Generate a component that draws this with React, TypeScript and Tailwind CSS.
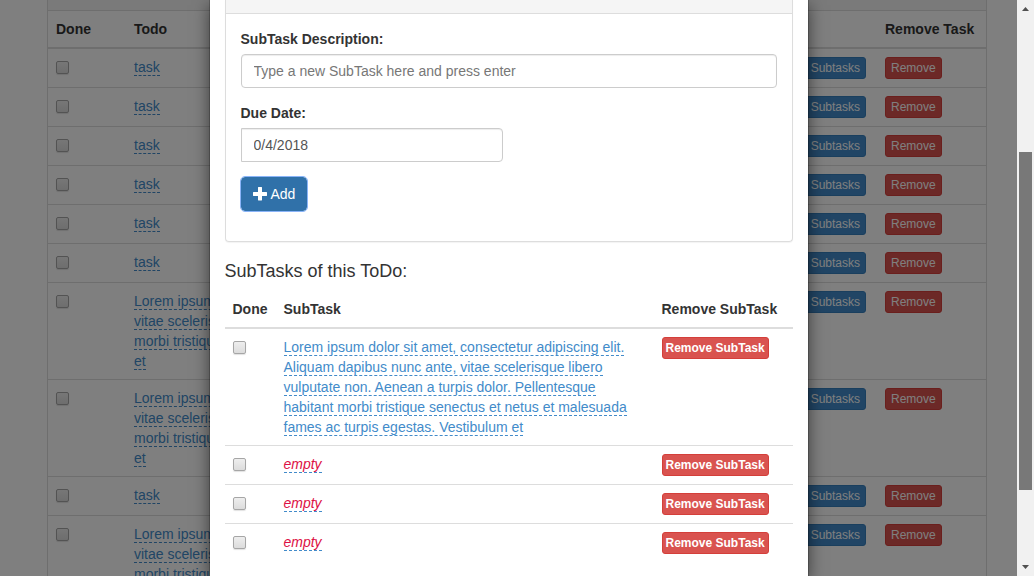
import type { InputHTMLAttributes } from "react";

const LONG_TEXT =
  "Lorem ipsum dolor sit amet, consectetur adipiscing elit. Aliquam dapibus nunc ante, vitae scelerisque libero vulputate non. Aenean a turpis dolor. Pellentesque habitant morbi tristique senectus et netus et malesuada fames ac turpis egestas. Vestibulum et";

const todos = [
  "task",
  "task",
  "task",
  "task",
  "task",
  "task",
  LONG_TEXT,
  LONG_TEXT,
  "task",
  LONG_TEXT,
];

const subTasks = [LONG_TEXT, "", "", ""];

function Checkbox(props: InputHTMLAttributes<HTMLInputElement>) {
  return (
    <input
      type="checkbox"
      className="mt-1 block size-[13px] appearance-none rounded-[2px] border border-[#a6a6a6] bg-linear-to-b from-[#eeeeee] to-[#dcdcdc] shadow-[0_1px_1px_rgba(0,0,0,0.12)] checked:from-[#428bca] checked:to-[#428bca]"
      {...props}
    />
  );
}

function EditableText({ text }: { text: string }) {
  if (!text) {
    return (
      <a href="#" className="border-b border-dashed border-[#428bca] text-[#dd1144] italic">
        empty
      </a>
    );
  }
  return (
    <a href="#" className="border-b border-dashed border-[#428bca] text-[#428bca]">
      {text}
    </a>
  );
}

function TodoTable() {
  return (
    <table className="w-full table-fixed border-separate border-spacing-0">
      <colgroup>
        <col className="w-[78px]" />
        <col className="w-[543px]" />
        <col />
        <col className="w-[109px]" />
      </colgroup>
      <thead>
        <tr className="text-left font-bold">
          <th className="border-b-2 border-[#ddd] p-2">Done</th>
          <th className="border-b-2 border-[#ddd] p-2">Todo</th>
          <th className="border-b-2 border-[#ddd] p-2" aria-label="Subtasks" />
          <th className="border-b-2 border-[#ddd] p-2 whitespace-nowrap">Remove Task</th>
        </tr>
      </thead>
      <tbody className="[&>tr+tr>td]:border-t [&>tr+tr>td]:border-[#ddd]">
        {todos.map((todo, i) => (
          <tr key={i} className="align-top">
            <td className="p-2">
              <Checkbox aria-label={`Todo ${i + 1} done`} />
            </td>
            <td className="p-2">
              <EditableText text={todo} />
            </td>
            <td className="py-2 pr-[11px]">
              <button
                type="button"
                className="ml-auto block rounded-[3px] border border-[#357ebd] bg-[#428bca] px-[5px] py-px text-xs leading-[18px] text-white"
              >
                Subtasks
              </button>
            </td>
            <td className="p-2">
              <button
                type="button"
                className="block rounded-[3px] border border-[#d43f3a] bg-[#d9534f] px-[5px] py-px text-xs leading-[18px] text-white"
              >
                Remove
              </button>
            </td>
          </tr>
        ))}
      </tbody>
    </table>
  );
}

function PlusIcon() {
  return (
    <svg viewBox="0 0 14 14" className="size-[14px] fill-current" aria-hidden="true">
      <path d="M5.400 0h3.200q.4 0 .4.4V5h4.600q.4 0 .4.4v3.200q0 .4-.4.4H9v4.100q0 .4-.4.4H5.400q-.4 0-.4-.4V9H.4q-.4 0-.4-.4V5.400q0-.4.4-.4H5V.4q0-.4.4-.4z" />
    </svg>
  );
}

function SubTaskForm() {
  return (
    <section className="rounded-b border border-t-0 border-[#ddd] shadow-[0_1px_1px_rgba(0,0,0,0.05)]">
      <div className="h-[14px] border-b border-[#ddd] bg-[#f5f5f5]" />
      <form className="p-[15px]" onSubmit={(e) => e.preventDefault()}>
        <label htmlFor="description" className="mb-[5px] block font-bold">
          SubTask Description:
        </label>
        <input
          id="description"
          type="text"
          placeholder="Type a new SubTask here and press enter"
          className="mb-[15px] block h-[34px] w-full rounded border border-[#ccc] px-3 text-[#555] shadow-[inset_0_1px_1px_rgba(0,0,0,0.075)] placeholder:text-[#777]"
        />
        <label htmlFor="due" className="mb-[5px] block font-bold">
          Due Date:
        </label>
        <input
          id="due"
          type="text"
          defaultValue="0/4/2018"
          className="mb-[15px] block h-[34px] w-[262px] rounded-r border border-[#ccc] px-3 text-[#555] shadow-[inset_0_1px_1px_rgba(0,0,0,0.075)]"
        />
        <button
          type="submit"
          className="mb-[15px] flex h-[34px] items-center gap-1 rounded border border-[#3071a9] bg-[#3071a9] px-[11px] text-white outline-1 outline-[#8ab4f8]"
        >
          <PlusIcon />
          Add
        </button>
      </form>
    </section>
  );
}

function SubTaskTable() {
  return (
    <table className="w-full table-fixed border-separate border-spacing-0">
      <colgroup>
        <col className="w-[51px]" />
        <col />
        <col className="w-[139px]" />
      </colgroup>
      <thead>
        <tr className="text-left font-bold">
          <th className="border-b-2 border-[#ddd] p-2">Done</th>
          <th className="border-b-2 border-[#ddd] p-2">SubTask</th>
          <th className="border-b-2 border-[#ddd] p-2 whitespace-nowrap">Remove SubTask</th>
        </tr>
      </thead>
      <tbody className="[&>tr+tr>td]:border-t [&>tr+tr>td]:border-[#ddd]">
        {subTasks.map((subTask, i) => (
          <tr key={i} className="align-top">
            <td className="p-2">
              <Checkbox aria-label={`SubTask ${i + 1} done`} />
            </td>
            <td className="p-2">
              <EditableText text={subTask} />
            </td>
            <td className="p-2">
              <button
                type="button"
                className="block rounded-[3px] border border-[#d43f3a] bg-[#d9534f] px-[3px] py-px text-xs leading-[18px] font-bold whitespace-nowrap text-white"
              >
                Remove SubTask
              </button>
            </td>
          </tr>
        ))}
      </tbody>
    </table>
  );
}

function Scrollbar() {
  return (
    <div className="flex w-[17px] shrink-0 flex-col items-center bg-[#f1f1f1]" aria-hidden="true">
      <svg viewBox="0 0 17 17" className="size-[17px] fill-[#505050]">
        <path d="M5 11 8.500 7 12 11z" />
      </svg>
      <div className="flex w-full flex-1 flex-col items-center">
        <div className="grow-135" />
        <div className="w-[13px] grow-338 bg-[#787878]" />
        <div className="grow-69" />
      </div>
      <svg viewBox="0 0 17 17" className="size-[17px] fill-[#505050]">
        <path d="M5 6h7L8.500 10z" />
      </svg>
    </div>
  );
}

export default function App() {
  return (
    <div className="relative h-screen overflow-hidden bg-white font-['Liberation_Sans',Arial,sans-serif] text-sm leading-5 text-[#333]">
      <main className="mx-auto min-h-full max-w-[940px] border-x border-[#ddd]">
        <div className="h-[11px] border-b border-[#ddd] bg-[#f5f5f5]" />
        <TodoTable />
      </main>

      <div className="absolute inset-0 flex bg-black/50">
        <div className="flex-1">
          <div
            role="dialog"
            aria-label="SubTasks"
            className="mx-auto min-h-full w-full max-w-[600px] border-x border-black/20 bg-white bg-clip-padding px-[15px] shadow-[0_5px_15px_rgba(0,0,0,0.5)]"
          >
            <SubTaskForm />
            <h4 className="mt-[19px] mb-[10px] text-lg leading-5 font-medium">
              SubTasks of this ToDo:
            </h4>
            <SubTaskTable />
          </div>
        </div>
        <Scrollbar />
      </div>
    </div>
  );
}
